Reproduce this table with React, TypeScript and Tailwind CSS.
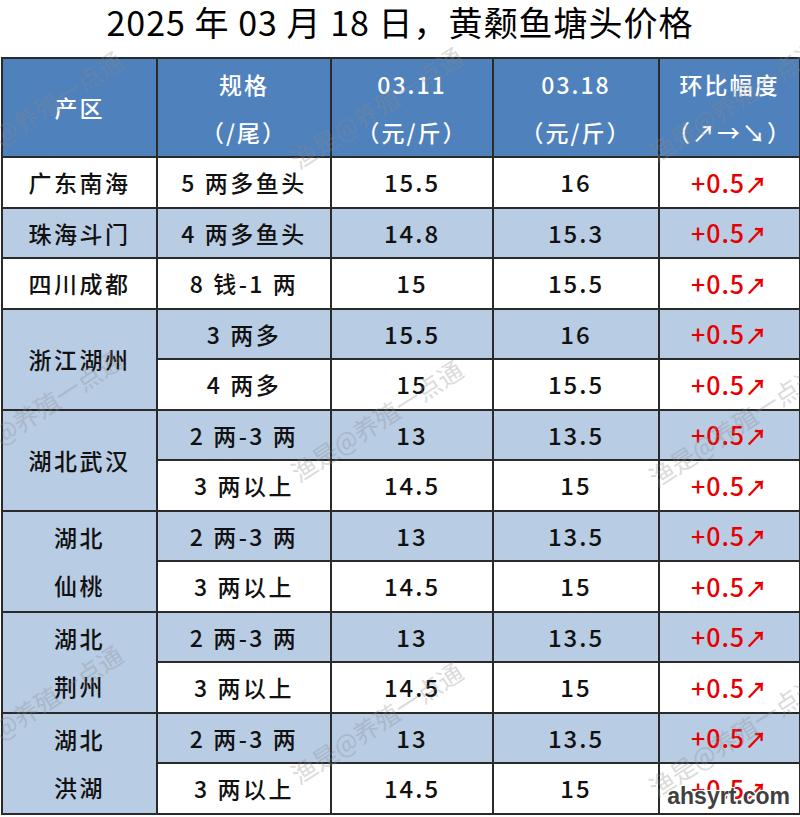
import React from "react";

type Sub = { spec: string; a: string; b: string };
type Group = { region: string[]; subs: Sub[] };

const groups: Group[] = [
  { region: ["广东南海"], subs: [{ spec: "5 两多鱼头", a: "15.5", b: "16" }] },
  { region: ["珠海斗门"], subs: [{ spec: "4 两多鱼头", a: "14.8", b: "15.3" }] },
  { region: ["四川成都"], subs: [{ spec: "8 钱-1 两", a: "15", b: "15.5" }] },
  {
    region: ["浙江湖州"],
    subs: [
      { spec: "3 两多", a: "15.5", b: "16" },
      { spec: "4 两多", a: "15", b: "15.5" },
    ],
  },
  {
    region: ["湖北武汉"],
    subs: [
      { spec: "2 两-3 两", a: "13", b: "13.5" },
      { spec: "3 两以上", a: "14.5", b: "15" },
    ],
  },
  {
    region: ["湖北", "仙桃"],
    subs: [
      { spec: "2 两-3 两", a: "13", b: "13.5" },
      { spec: "3 两以上", a: "14.5", b: "15" },
    ],
  },
  {
    region: ["湖北", "荆州"],
    subs: [
      { spec: "2 两-3 两", a: "13", b: "13.5" },
      { spec: "3 两以上", a: "14.5", b: "15" },
    ],
  },
  {
    region: ["湖北", "洪湖"],
    subs: [
      { spec: "2 两-3 两", a: "13", b: "13.5" },
      { spec: "3 两以上", a: "14.5", b: "15" },
    ],
  },
];

const marks: { x: number; y: number }[] = [
  { x: -40, y: 176 },
  { x: -40, y: 475 },
  { x: -40, y: 770 },
  { x: 300, y: 172 },
  { x: 300, y: 485 },
  { x: 300, y: 787 },
  { x: 658, y: 165 },
  { x: 658, y: 490 },
  { x: 658, y: 800 },
];

const B = "border-2 border-[#2a2a2a] p-0";

export default function App() {
  let rowIndex = 0;
  return (
    <div
      className="relative w-[800px] h-[817px] bg-white overflow-hidden text-[#111] font-medium"
      style={{ fontFamily: '"Noto Sans CJK SC", "Noto Sans", sans-serif' }}
    >
      <div className="h-[57px] flex justify-center">
        <div className="text-[34px] leading-[44px] tracking-[1px] text-black font-normal">
          2025 年 03 月 18 日，黄颡鱼塘头价格
        </div>
      </div>
      <table className="ml-[1px] w-[798px] table-fixed border-collapse border-2 border-[#2a2a2a]">
        <colgroup>
          <col className="w-[155px]" />
          <col className="w-[174px]" />
          <col className="w-[162px]" />
          <col className="w-[166px]" />
          <col className="w-[141px]" />
        </colgroup>
        <thead>
          <tr className="h-[99px] bg-[#4f81bd] text-white text-[23px] tracking-[2px]">
            <th className={`${B} font-medium`}>产区</th>
            <th className={`${B} font-medium leading-[48px]`}>
              <div>规格</div>
              <div>（/尾）</div>
            </th>
            <th className={`${B} font-medium leading-[48px]`}>
              <div>03.11</div>
              <div>（元/斤）</div>
            </th>
            <th className={`${B} font-medium leading-[48px]`}>
              <div>03.18</div>
              <div>（元/斤）</div>
            </th>
            <th className={`${B} font-medium leading-[48px]`}>
              <div>环比幅度</div>
              <div>（↗→↘）</div>
            </th>
          </tr>
        </thead>
        <tbody className="text-[23px] tracking-[2.5px] text-center leading-[32px]">
          {groups.map((g, gi) =>
            g.subs.map((s, si) => {
              const blue = rowIndex % 2 === 1;
              rowIndex++;
              const bg = blue ? "bg-[#b8cce4]" : "bg-white";
              return (
                <tr key={`${gi}-${si}`} className="h-[50.5px]">
                  {si === 0 && (
                    <td
                      rowSpan={g.subs.length}
                      className={`${B} ${g.subs.length > 1 ? "bg-[#b8cce4]" : bg} leading-[48px]`}
                    >
                      {g.region.map((r) => (
                        <div key={r}>{r}</div>
                      ))}
                    </td>
                  )}
                  <td className={`${B} ${bg}`}>{s.spec}</td>
                  <td className={`${B} ${bg} text-[24px] tracking-[2px]`}>{s.a}</td>
                  <td className={`${B} ${bg} text-[24px] tracking-[2px]`}>{s.b}</td>
                  <td className={`${B} ${bg} text-[#e60000] text-[25px] tracking-[1px]`}>
                    +0.5<span className="text-[22px] font-bold">↗</span>
                  </td>
                </tr>
              );
            })
          )}
        </tbody>
      </table>

      <div className="pointer-events-none absolute inset-0">
        {marks.map((m, i) => (
          <div
            key={i}
            className="absolute whitespace-nowrap text-[25px] font-normal text-[#8a8a8a] opacity-30 origin-bottom-left -rotate-[33deg] leading-none"
            style={{ left: m.x, top: m.y - 25 }}
          >
            渔是@养殖一点通
          </div>
        ))}
      </div>

      <div
        className="absolute right-[10px] bottom-[9px] text-[23px] font-bold leading-none text-[#404040] [text-shadow:1px_1px_0_#fff,-1px_-1px_0_#fff,1px_-1px_0_#fff,-1px_1px_0_#fff,0_0_3px_#fff]"
        style={{ fontFamily: '"Liberation Sans", Arial, sans-serif' }}
      >
        ahsyrt.com
      </div>
    </div>
  );
}
